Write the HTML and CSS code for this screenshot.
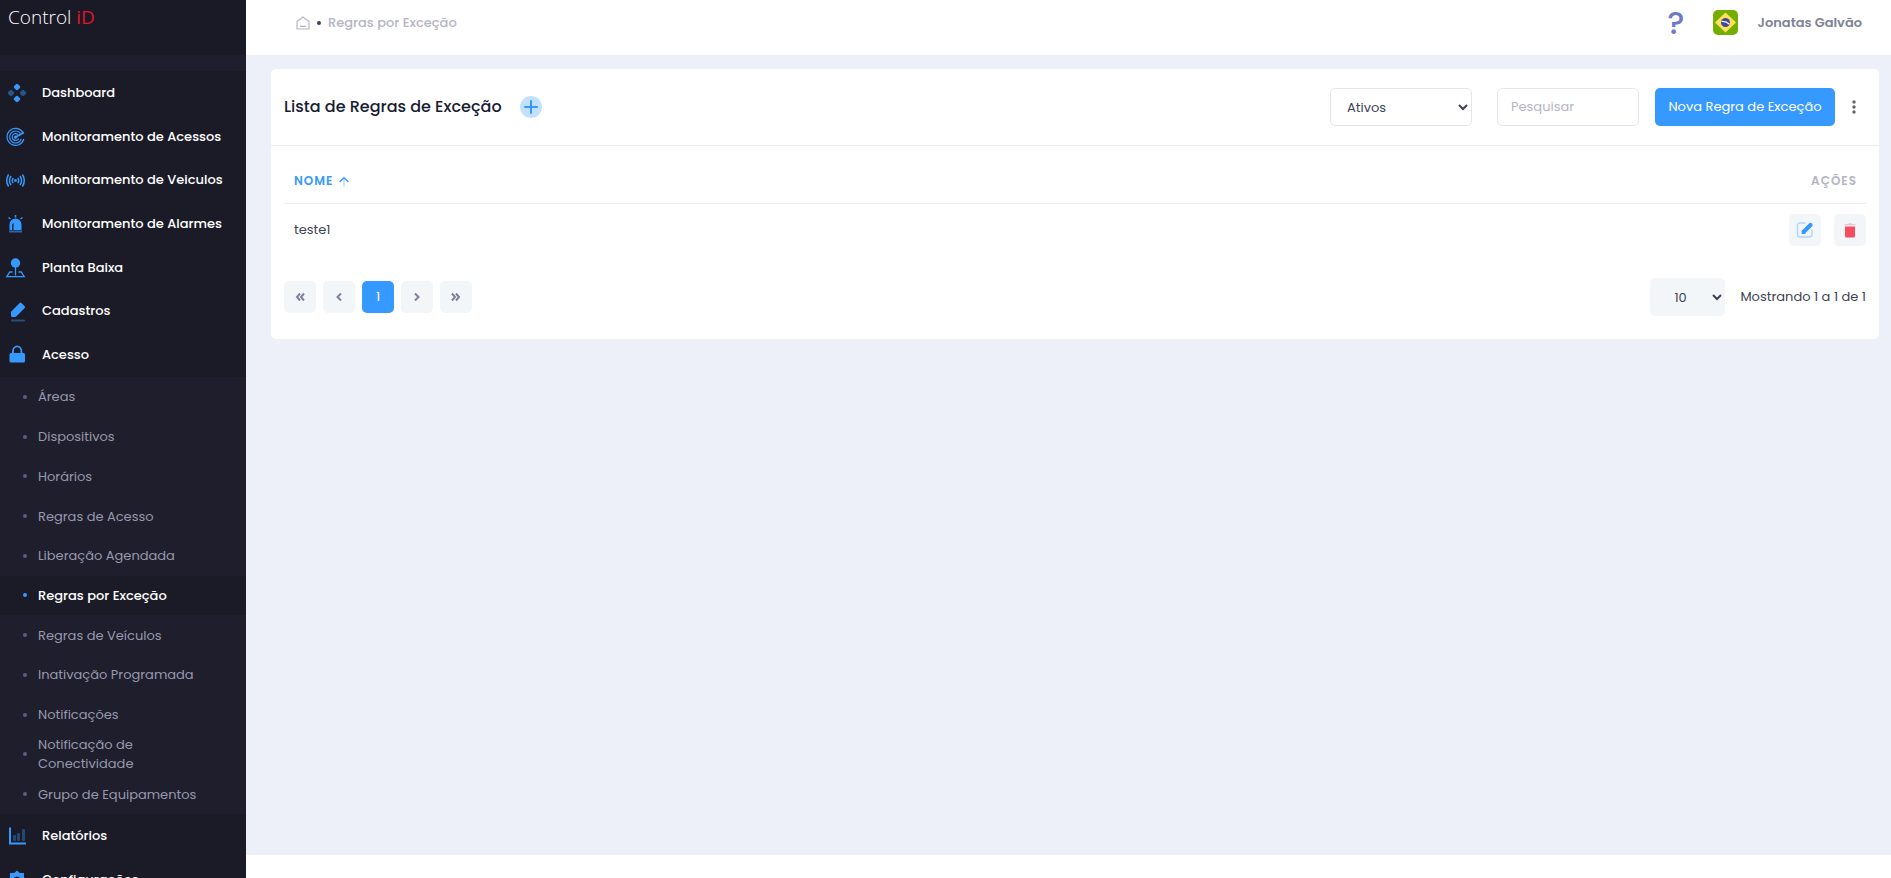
FILE: index.html
```html
<!DOCTYPE html>
<html lang="pt-BR">
<head>
<meta charset="utf-8">
<title>Regras por Exceção</title>
<link rel="stylesheet" href="styles.css">
</head>
<body>
<div class="app">
  <aside class="sidebar">
    <a class="brand" href="#">Control <span class="brand-accent">iD</span></a>
    <nav class="menu" aria-label="Menu principal">
      <ul class="menu-group">
        <li><a class="menu-link" href="#"><svg class="menu-icon" viewBox="0 0 24 24"><g fill="#3699ff"><rect x="9.300" y="3.300" width="5.400" height="5.400" rx="1.400" transform="rotate(45 12 6)"/><rect x="9.300" y="15.300" width="5.400" height="5.400" rx="1.400" transform="rotate(45 12 18)"/><g opacity=".45"><rect x="3.300" y="9.300" width="5.400" height="5.400" rx="1.400" transform="rotate(45 6 12)"/><rect x="15.300" y="9.300" width="5.400" height="5.400" rx="1.400" transform="rotate(45 18 12)"/></g></g></svg>Dashboard</a></li>
        <li><a class="menu-link" href="#"><svg class="menu-icon" viewBox="0 0 24 24" fill="none" stroke="#3699ff" stroke-width="1.2"><path d="M17.8 7.4A8.5 8.5 0 1 0 18.8 14M15.3 8.2A6 6 0 1 0 16.3 14M12.8 9.4A3.4 3.4 0 1 0 13.6 13.6"/><path d="M10.5 12.2 18.9 7.4" stroke-width="1.8"/><circle cx="10.5" cy="12.2" r="1" fill="#3699ff"/></svg>Monitoramento de Acessos</a></li>
        <li><a class="menu-link" href="#"><svg class="menu-icon" viewBox="0 0 24 24" fill="none" stroke="#3699ff" stroke-width="1.5"><path d="M3.6 6.5Q-.2 12.5 3.6 18.5M6 8Q3 12.5 6 17M8.2 9.8Q6.4 12.5 8.2 15.2M17.4 6.5Q21.2 12.5 17.4 18.5M15 8Q18 12.5 15 17M12.8 9.8Q14.6 12.5 12.8 15.2"/><circle cx="10.5" cy="12.5" r="1.4" fill="#3699ff" stroke="none"/></svg>Monitoramento de Veiculos</a></li>
        <li><a class="menu-link" href="#"><svg class="menu-icon" viewBox="0 0 24 24"><path fill="#3699ff" fill-rule="evenodd" d="M4.500 18V12.500a6 6 0 0 1 12 0V18zM7.200 18V13q0-1.500 1.300-2v7z"/><path fill="#3699ff" opacity=".6" d="M4 18.500h13v2H4z"/><path d="M10.500 3v2.500M3.500 5.500l2 1.500M17.500 5.500l-2 1.500" stroke="#3699ff" stroke-width="1.500"/></svg>Monitoramento de Alarmes</a></li>
        <li><a class="menu-link" href="#"><svg class="menu-icon" viewBox="0 0 24 24"><circle cx="10.500" cy="7" r="4.700" fill="#3699ff"/><path d="M10.500 11v8.500M7.500 16H4.800L1.800 20.600h17.400l-3-4.600H13.500" fill="none" stroke="#3699ff" stroke-width="1.300"/></svg>Planta Baixa</a></li>
        <li><a class="menu-link" href="#"><svg class="menu-icon" viewBox="0 0 24 24"><path fill="#3699ff" d="M6 12.700 14.700 4q.9-.8 1.800 0L19.700 7.200q.9.900 0 1.800L11.500 17.200q-.8.800-1.600.8H7.200Q6 18 6 16.800z"/><rect x="6" y="20.500" width="14" height="2" rx="1" fill="#3699ff" opacity=".4"/></svg>Cadastros</a></li>
        <li><a class="menu-link" href="#"><svg class="menu-icon" viewBox="0 0 24 24"><rect x="4.500" y="10" width="15.500" height="9.500" rx="1.500" fill="#3699ff"/><path d="M8 10.500V8a4.200 4.600 0 0 1 8.400 0v2.500" fill="none" stroke="#3699ff" stroke-width="1.800"/></svg>Acesso</a></li>
      </ul>
      <ul class="submenu">
        <li><a class="sub-link" href="#">Áreas</a></li>
        <li><a class="sub-link" href="#">Dispositivos</a></li>
        <li><a class="sub-link" href="#">Horários</a></li>
        <li><a class="sub-link" href="#">Regras de Acesso</a></li>
        <li><a class="sub-link" href="#">Liberação Agendada</a></li>
        <li><a class="sub-link active" href="#" aria-current="page">Regras por Exceção</a></li>
        <li><a class="sub-link" href="#">Regras de Veículos</a></li>
        <li><a class="sub-link" href="#">Inativação Programada</a></li>
        <li><a class="sub-link" href="#">Notificações</a></li>
        <li><a class="sub-link wrap" href="#">Notificação de Conectividade</a></li>
        <li><a class="sub-link" href="#">Grupo de Equipamentos</a></li>
      </ul>
      <ul class="menu-tail">
        <li><a class="menu-link" href="#"><svg class="menu-icon" viewBox="0 0 24 24" fill="#3699ff"><path d="M4 3.500h2V18.500H21v2H4z"/><g opacity=".35"><rect x="8" y="11" width="3" height="6" rx="1"/><rect x="12" y="9" width="3" height="8" rx="1"/><rect x="17" y="5" width="3" height="12" rx="1"/></g></svg>Relatórios</a></li>
        <li><a class="menu-link" href="#"><svg class="menu-icon" viewBox="0 0 24 24"><path fill="#3699ff" fill-rule="evenodd" d="M12 2.500 14.800 5H19v4.300L21.500 12 19 14.800V19h-4.200L12 21.500 9.200 19H5v-4.200L2.500 12 5 9.300V5h4.200zM12 8.500a3.500 3.500 0 1 0 0 7 3.500 3.500 0 0 0 0-7z"/></svg>Configurações</a></li>
      </ul>
    </nav>
  </aside>

  <div class="page">
    <header class="topbar">
      <nav class="breadcrumb" aria-label="Trilha">
        <a class="home" href="#" aria-label="Início"><svg width="14" height="14" viewBox="0 0 14 14" fill="none" stroke="#b5b5c3" stroke-width="1.200"><path d="M1 5.600 7 1l6 4.600V13H1zM4 10.300h6"/></svg></a>
        <span class="crumb-dot"></span>
        <a class="crumb" href="#">Regras por Exceção</a>
      </nav>
      <div class="user-area">
        <a class="help" href="#">?</a>
        <button class="flag" type="button" aria-label="Idioma"><svg width="25" height="25" viewBox="0 0 25 25"><rect width="25" height="25" rx="5" fill="#73af00"/><path d="M2 12.500 12.500 2.500 23 12.500 12.500 22.500z" fill="#ffe15a"/><circle cx="12.500" cy="12.500" r="4.500" fill="#41479b"/><path d="M8.500 11.500q4.500-.5 8 2.800" fill="none" stroke="#f5f5f5" stroke-width="1.200"/></svg></button>
        <a class="user" href="#">Jonatas Galvão</a>
      </div>
    </header>

    <main class="content">
      <section class="card">
        <div class="card-head">
          <h1 class="title">Lista de Regras de Exceção</h1>
          <button class="add" type="button" aria-label="Adicionar"><svg width="22" height="22" viewBox="0 0 22 22"><circle cx="11" cy="11" r="11" fill="#c3e0ff"/><path d="M11 5v12M5 11h12" stroke="#3699ff" stroke-width="2" stroke-linecap="round"/></svg></button>
          <div class="tools">
            <select class="field status" aria-label="Situação"><option>Ativos</option><option>Inativos</option></select>
            <input class="field search" type="text" placeholder="Pesquisar" aria-label="Pesquisar">
            <button class="primary" type="button">Nova Regra de Exceção</button>
            <button class="more" type="button" aria-label="Mais opções"><svg width="4" height="14" viewBox="0 0 4 14" fill="#666"><circle cx="2" cy="2" r="1.700"/><circle cx="2" cy="7" r="1.700"/><circle cx="2" cy="12" r="1.700"/></svg></button>
          </div>
        </div>
        <div class="card-body">
          <table class="list">
            <thead>
              <tr>
                <th class="sorted" aria-sort="ascending"><span class="sort">NOME <svg width="10" height="12" viewBox="0 0 10 12" fill="none" stroke="#3699ff"><path d="M5 4.500v7" stroke-width="1.800" opacity=".3"/><path d="M1 6.500 5 2.800l4 3.700" stroke-width="1.500" stroke-linecap="round" stroke-linejoin="round"/></svg></span></th>
                <th class="actions-col">AÇÕES</th>
              </tr>
            </thead>
            <tbody>
              <tr>
                <td>teste1</td>
                <td><div class="actions">
                  <button class="square" type="button" aria-label="Editar"><svg width="18" height="18" viewBox="0 0 18 18" fill="none"><path d="M9.500 2H4Q1.500 2 1.500 4.500v9Q1.500 16 4 16h9q3 0 3-2.500V9" stroke="#3699ff" stroke-width="1.400" opacity=".35"/><path d="M8 10.500 14.500 4" stroke="#3699ff" stroke-width="4.200" stroke-linecap="round"/><path fill="#3699ff" d="m5.800 8.800-.2 4.200 4.200-.3z"/></svg></button>
                  <button class="square" type="button" aria-label="Excluir"><svg width="18" height="18" viewBox="0 0 18 18" fill="#f64e60"><path d="M4 5.500h10V15q0 1.500-1.500 1.500h-7Q4 16.500 4 15z"/><path opacity=".3" d="M3.500 3h4V2h3v1h4v1.300h-11z"/></svg></button>
                </div></td>
              </tr>
            </tbody>
          </table>
          <div class="list-foot">
            <nav class="pager" aria-label="Paginação">
              <button class="page-btn" type="button" aria-label="Primeira"><svg width="10" height="10" viewBox="0 0 10 10"><path d="M5 1.500 2 5l3 3.500M9 1.500 6 5l3 3.500"/></svg></button>
              <button class="page-btn" type="button" aria-label="Anterior"><svg width="10" height="10" viewBox="0 0 10 10"><path d="M7 1.500 3.500 5 7 8.500"/></svg></button>
              <button class="page-btn current" type="button" aria-current="page">1</button>
              <button class="page-btn" type="button" aria-label="Próxima"><svg width="10" height="10" viewBox="0 0 10 10"><path d="M3 1.500 6.500 5 3 8.500"/></svg></button>
              <button class="page-btn" type="button" aria-label="Última"><svg width="10" height="10" viewBox="0 0 10 10"><path d="m1 1.500 3 3.500-3 3.500M5 1.500 8 5 5 8.500"/></svg></button>
            </nav>
            <div class="summary">
              <select class="page-size" aria-label="Itens por página"><option>10</option><option>25</option></select>
              <span>Mostrando 1 a 1 de 1</span>
            </div>
          </div>
        </div>
      </section>
    </main>
    <footer class="footer"></footer>
  </div>
</div>
</body>
</html>
```

FILE: styles.css
```css
* { box-sizing: border-box; }

body {
  margin: 0;
  font-family: Poppins, Inter, "Liberation Sans", sans-serif;
  font-size: 13px;
  line-height: 20px;
  color: #3f4254;
  background: #edf0f8;
}

a { color: inherit; text-decoration: none; }
ul { list-style: none; margin: 0; padding: 0; }
button, select, input { font: inherit; color: inherit; }
button { border: 0; padding: 0; background: none; cursor: pointer; }
svg { display: block; }

.app { display: flex; height: 100vh; overflow: hidden; }

/* Sidebar */
.sidebar { flex: 0 0 246px; background: #1e1e2d; overflow: hidden; }
.brand {
  display: block;
  height: 55px;
  padding: 3px 8px;
  background: #1a1a27;
  color: #fff;
  font-family: "Open Sans", "Noto Sans", sans-serif;
  font-size: 19px;
  font-weight: 300;
  line-height: 28px;
}
.brand-accent { color: #e0152b; font-weight: 400; }
.menu { padding-top: 16px; }
.menu-group, .submenu { display: grid; grid-auto-rows: 1fr; }
.menu-group { height: 306px; background: #1b1b28; }
.submenu { height: 437px; }
.menu-tail { display: grid; grid-auto-rows: 44px; background: #1b1b28; }
.menu-link {
  display: flex;
  align-items: center;
  gap: 13px;
  height: 100%;
  padding-left: 5px;
  color: #fff;
  font-weight: 500;
}
.menu-icon { width: 24px; height: 24px; flex: none; }
.sub-link {
  display: flex;
  align-items: center;
  gap: 11px;
  height: 100%;
  padding: 0 80px 0 23px;
  color: #9899ac;
  line-height: 19px;
  white-space: nowrap;
}
.sub-link.wrap { white-space: normal; }
.sub-link::before {
  content: "";
  flex: none;
  width: 4px;
  height: 4px;
  border-radius: 2px;
  background: #5c5e81;
}
.sub-link.active { background: #1b1b28; color: #fff; font-weight: 500; }
.sub-link.active::before { background: #3699ff; }

/* Page frame */
.page { flex: 1; min-width: 0; display: flex; flex-direction: column; }
.topbar {
  display: flex;
  justify-content: space-between;
  height: 55px;
  padding: 0 29px 10px 50px;
  background: #fff;
}
.breadcrumb, .user-area { display: flex; align-items: center; }
.breadcrumb { gap: 7px; }
.crumb-dot { width: 4px; height: 4px; border-radius: 2px; background: #3f4254; }
.crumb { color: #b5b5c3; font-weight: 500; }
.help { margin-right: 28px; color: #6c7ac9; font-size: 32px; font-weight: 500; line-height: 32px; }
.flag { margin-right: 20px; }
.user { color: #7e8299; font-weight: 600; }
.content { flex: 1; padding: 14px 12px 14px 25px; }
.footer { height: 23px; background: #fff; }

/* Card */
.card { background: #fff; border-radius: 5px; }
.card-head {
  display: flex;
  align-items: center;
  min-height: 77px;
  padding: 0 23px 0 13px;
  border-bottom: 1px solid #ebedf3;
}
.title { margin: 0 18px 0 0; color: #181c32; font-size: 16px; font-weight: 500; }
.tools { display: flex; align-items: center; margin-left: auto; }
.field {
  width: 142px;
  height: 38px;
  border: 1px solid #e4e6ef;
  border-radius: 5px;
  background: #fff;
}
.status { margin-right: 25px; padding: 0 0 0 12px; }
.search { margin-right: 16px; padding: 0 13px; }
.search::placeholder { color: #b5b5c3; opacity: 1; }
.primary {
  width: 180px;
  height: 38px;
  border-radius: 5px;
  background: #3699ff;
  color: #fff;
  white-space: nowrap;
}
.more { margin-left: 17px; }
.card-body { padding: 13px 13px 23px; }

.list { width: 100%; border-collapse: collapse; }
.list th {
  height: 44px;
  padding: 0 9px 0 10px;
  border-bottom: 1px solid #ebedf3;
  color: #b5b5c3;
  font-size: 12px;
  font-weight: 600;
  letter-spacing: 1px;
  text-align: left;
}
.list th.sorted { color: #3699ff; }
.list th.actions-col { text-align: right; }
.sort { display: inline-flex; align-items: center; gap: 6px; }
.list td { height: 53px; padding: 0 0 0 10px; }
.actions { display: flex; justify-content: flex-end; gap: 13px; }
.square, .page-btn {
  display: flex;
  align-items: center;
  justify-content: center;
  height: 32px;
  width: 32px;
  border-radius: 5px;
  background: #f3f6f9;
}

.list-foot { display: flex; justify-content: space-between; align-items: center; padding-top: 22px; }
.pager { display: flex; gap: 7px; }
.page-btn svg { fill: none; stroke: #7e8299; stroke-width: 2; }
.page-btn.current { background: #3699ff; color: #fff; }
.summary { display: flex; align-items: center; gap: 15px; }
.page-size {
  width: 75px;
  height: 38px;
  padding: 0 0 0 20px;
  border: 0;
  border-radius: 5px;
  background: #f3f6f9;
}
```
